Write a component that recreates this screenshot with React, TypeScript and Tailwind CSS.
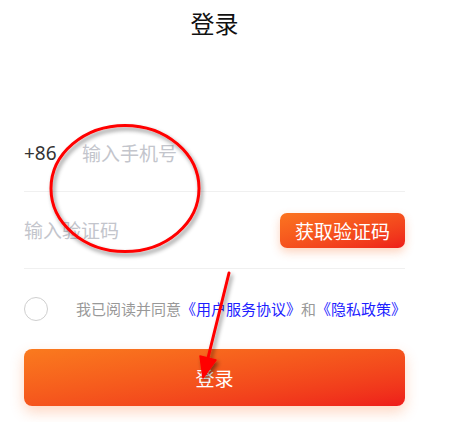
const cjk = '"Noto Sans CJK SC", "Noto Sans", sans-serif';

function Annotation() {
  return (
    <svg
      className="pointer-events-none absolute left-0 top-0"
      width="463"
      height="422"
      viewBox="0 0 463 422"
    >
      <defs>
        <filter id="shade" x="-20%" y="-20%" width="140%" height="140%">
          <feDropShadow dx="2" dy="3" stdDeviation="2" floodColor="#000" floodOpacity="0.45" />
        </filter>
      </defs>
      <g filter="url(#shade)" stroke="#ff0000" fill="none" strokeWidth="3">
        <ellipse cx="125" cy="188.5" rx="74" ry="63" />
        <line x1="229" y1="273" x2="206" y2="366" strokeLinecap="round" />
        <path d="M200 356 L203 378 L216 360 Z" fill="#ff0000" strokeWidth="1.5" strokeLinejoin="round" />
      </g>
    </svg>
  );
}

export default function App() {
  return (
    <div className="relative h-[422px] w-[463px] overflow-hidden bg-white" style={{ fontFamily: cjk }}>
      <div className="w-[429px] px-6">
        {/* Title */}
        <h1 className="pt-[5px] text-center text-[24px] font-normal leading-[36px] text-[#111]">登录</h1>

        {/* Phone */}
        <div className="mt-[74px] flex h-[77px] items-center border-b border-[#f0f0f0]">
          <span className="w-[58px] text-[19px] text-[#333]" style={{ fontFamily: '"Noto Sans", sans-serif' }}>
            +86
          </span>
          <input
            className="flex-1 bg-transparent text-[19px] text-[#333] outline-none placeholder:text-[#c3c5cc]"
            placeholder="输入手机号"
          />
        </div>

        {/* Code */}
        <div className="flex h-[77px] items-center justify-between border-b border-[#f0f0f0]">
          <input
            className="w-[200px] bg-transparent text-[19px] text-[#333] outline-none placeholder:text-[#c3c5cc]"
            placeholder="输入验证码"
          />
          <button className="mt-[1px] h-[35px] w-[125px] rounded-[7px] bg-gradient-to-br from-[#fb7420] to-[#ee1b1b] text-[19px] leading-[35px] text-white shadow-[0_4px_10px_rgba(250,110,40,0.3)]">
            获取验证码
          </button>
        </div>

        {/* Agreement */}
        <div className="mt-[28px] flex h-[24px] items-center">
          <span className="h-[24px] w-[24px] shrink-0 rounded-full border border-[#cfcfcf]" />
          <p className="ml-[28px] whitespace-nowrap text-[15px] text-[#999]">
            我已阅读并同意<span className="text-[#1e1eff]">《用户服务协议》</span>和
            <span className="text-[#1e1eff]">《隐私政策》</span>
          </p>
        </div>

        {/* Submit */}
        <button className="mt-[28px] h-[57px] w-full rounded-[8px] bg-gradient-to-br from-[#fa7a1e] to-[#ee1b1b] text-[19px] leading-[53px] text-white shadow-[0_6px_14px_rgba(250,110,40,0.28)]">
          登录
        </button>
      </div>
      <Annotation />
    </div>
  );
}
